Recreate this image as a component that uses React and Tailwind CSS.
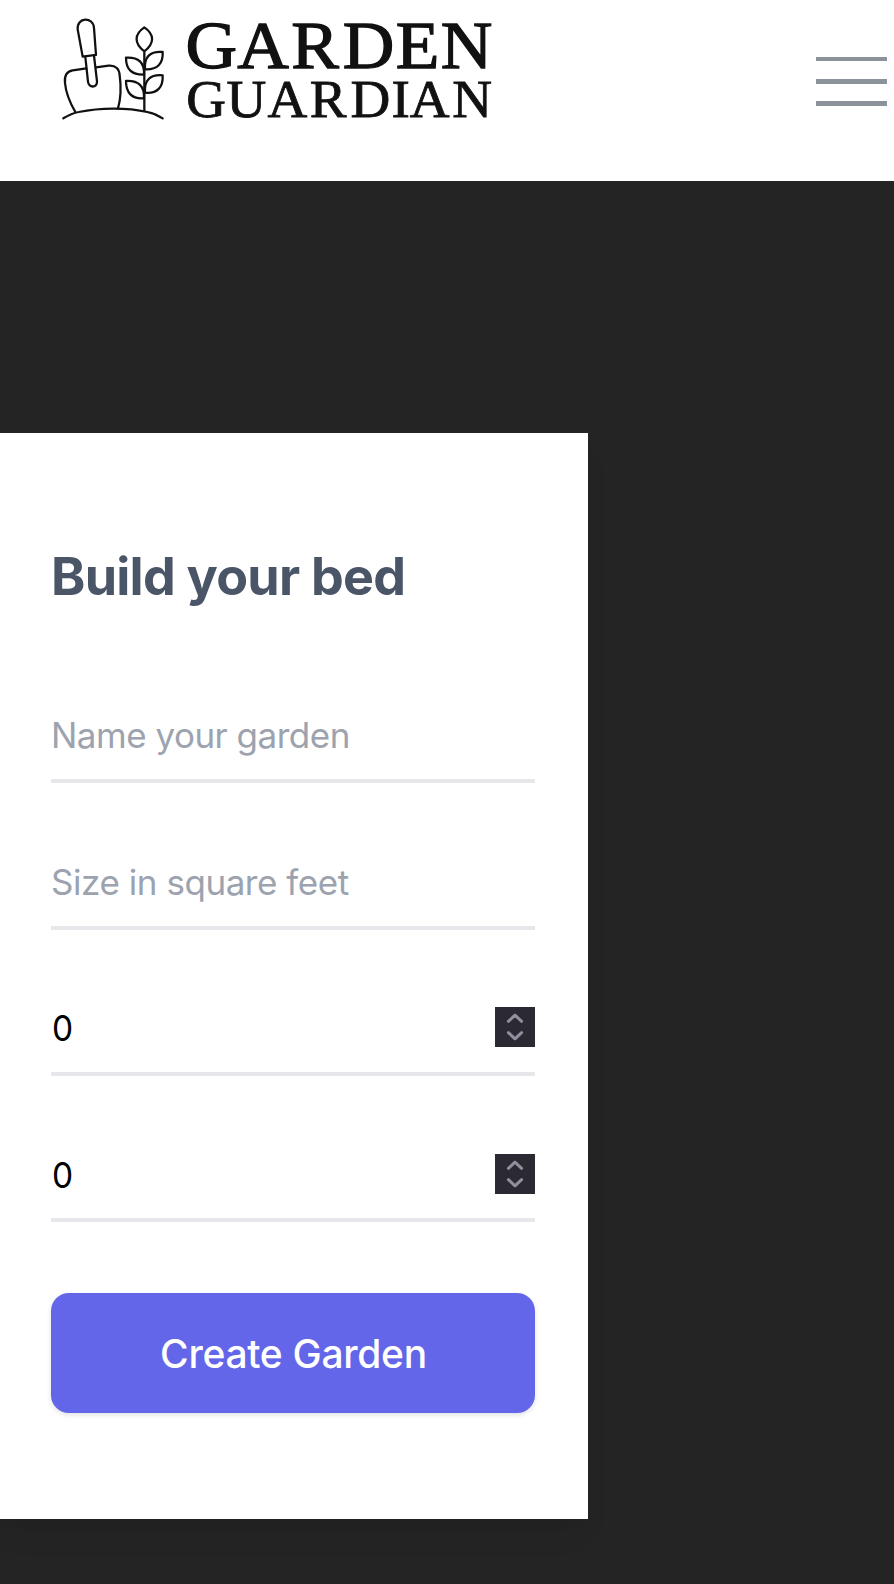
import React from "react";

function Logo() {
  return (
    <svg className="block h-[135px] w-[520px]" viewBox="0 0 520 135" fill="none" role="img">
      <g transform="translate(50 0) scale(0.33333)" stroke="#111" strokeWidth="6.8" strokeLinecap="round" strokeLinejoin="round">
        <path d="M83 88C80 50 130 49 132 84L138 165L98 170Z" />
        <path d="M106 171L114 245C116 265 142 264 141 244L132 167" />
        <path d="M109 205L68 211C49 214 43 230 45 249C48 283 61 310 76 336" />
        <path d="M138 202L176 197C198 195 208 208 209 226C214 262 213 293 204 325" />
        <path d="M40 355C56 345 69 339 86 336C150 323 230 322 292 336C311 340 325 346 338 355" />
        <path d="M283 82C252 103 252 130 283 154C314 130 314 103 283 82ZM283 154V332" />
        <path d="M285 208C282 171 300 153 338 156C340 191 322 210 285 208Z" />
        <path d="M282 224C284 188 266 171 228 173C228 208 245 225 282 224Z" />
        <path d="M285 278C282 241 300 223 338 226C340 261 322 282 285 278Z" />
        <path d="M282 295C284 259 266 241 228 243C228 278 245 298 282 295Z" />
      </g>
      <g fill="#111" stroke="#111" className="font-['Liberation_Serif',serif]">
        <text transform="scale(1.05 1)" x="176.6 226 277.4 326.4 376.8 419.8" y="67.8" strokeWidth="1.3" fontSize="68">GARDEN</text>
        <text transform="scale(1.03 1)" x="180.8 220 259.8 300.7 340.4 380.2 397.8 439.2" y="117.2" strokeWidth="0.8" fontSize="53.5">GUARDIAN</text>
      </g>
    </svg>
  );
}

function Spinner() {
  return (
    <span className="flex size-10 shrink-0 items-center justify-center bg-[#2b2a33]">
      <svg className="size-10" viewBox="0 0 40 40" fill="none" stroke="#8f8f9d" strokeWidth="3" strokeLinecap="round" strokeLinejoin="round">
        <path d="M13.4 14.3L20 8.2L26.6 14.3" />
        <path d="M13.4 25.7L20 31.8L26.6 25.7" />
      </svg>
    </span>
  );
}

function NumberField({ className }) {
  return (
    <div className={"flex justify-between border-b-4 border-gray-200 " + className}>
      <span className="origin-left scale-x-[0.93] pl-px text-[36px] leading-[42px] text-black">0</span>
      <Spinner />
    </div>
  );
}

export default function App() {
  return (
    <div className="flex h-[1584px] w-[894px] flex-col overflow-hidden bg-[#242424] font-[Inter,sans-serif]">
      <header className="flex h-[181px] shrink-0 justify-between bg-white pr-[7px]">
        <Logo />
        <button className="mt-[57px] flex h-[49px] w-[71px] flex-col justify-between">
          <span className="h-1 w-full bg-[#8b929a]" />
          <span className="h-[5px] w-full bg-[#8b929a]" />
          <span className="h-[5px] w-full bg-[#8b929a]" />
        </button>
      </header>
      <main className="pt-[252px]">
        <form className="flex h-[1086px] w-[588px] flex-col bg-white pt-[112px] pr-[53px] pl-[51px] shadow-[0_20px_30px_-6px_rgba(0,0,0,0.06),0_8px_12px_-4px_rgba(0,0,0,0.03)]">
          <h1 className="h-16 text-[52px] leading-[64px] font-bold tracking-[-0.75px] whitespace-nowrap text-[#4a5568]">Build your bed</h1>
          <div className="mt-[105px] h-[69px] border-b-4 border-gray-200 text-[35px] leading-[42px] tracking-[-0.5px] whitespace-nowrap text-[#9ca3af]">
            Name your garden
          </div>
          <div className="mt-[78px] h-[69px] border-b-4 border-gray-200 text-[35px] leading-[42px] tracking-[-0.45px] whitespace-nowrap text-[#9ca3af]">
            Size in square feet
          </div>
          <NumberField className="mt-[77px] h-[69px]" />
          <NumberField className="mt-[78px] h-[68px]" />
          <button type="button" className="mt-[71px] h-[120px] shrink-0 rounded-[18px] bg-[#6366e9] pt-[2px] pl-px text-[39px] font-medium tracking-[-0.3px] text-white shadow-[0_2px_5px_rgba(0,0,0,0.12)]">
            Create Garden
          </button>
        </form>
      </main>
    </div>
  );
}
